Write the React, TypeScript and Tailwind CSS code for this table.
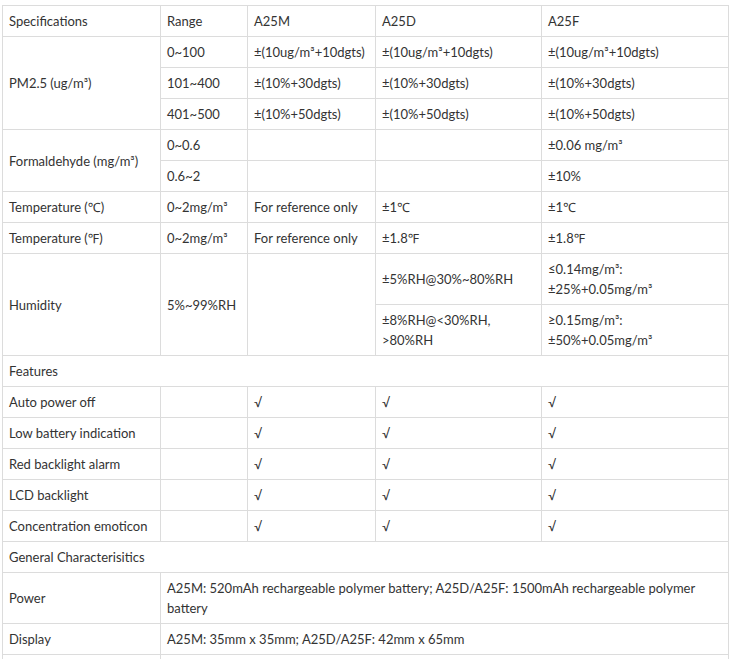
import React from "react";

const td = "border border-[#dcdcdc] px-[6px] py-[5px] align-middle text-left font-normal whitespace-nowrap";

export default function App() {
  return (
    <div
      className="bg-white w-[731px] h-[659px] overflow-hidden pt-[5px] pl-[2px] text-[13px] leading-[20px] text-[#333]"
      style={{ fontFamily: 'Lato, "Noto Sans", "DejaVu Sans", sans-serif' }}
    >
      <table className="border-collapse table-fixed w-[726px]">
        <colgroup>
          <col className="w-[158px]" />
          <col className="w-[87px]" />
          <col className="w-[128px]" />
          <col className="w-[166px]" />
          <col className="w-[187px]" />
        </colgroup>
        <tbody>
          <tr>
            <td className={td}>Specifications</td>
            <td className={td}>Range</td>
            <td className={td}>A25M</td>
            <td className={td}>A25D</td>
            <td className={td}>A25F</td>
          </tr>
          <tr>
            <td className={td} rowSpan={3}>PM2.5 (ug/m³)</td>
            <td className={td}>0~100</td>
            <td className={td}>±(10ug/m³+10dgts)</td>
            <td className={td}>±(10ug/m³+10dgts)</td>
            <td className={td}>±(10ug/m³+10dgts)</td>
          </tr>
          <tr>
            <td className={td}>101~400</td>
            <td className={td}>±(10%+30dgts)</td>
            <td className={td}>±(10%+30dgts)</td>
            <td className={td}>±(10%+30dgts)</td>
          </tr>
          <tr>
            <td className={td}>401~500</td>
            <td className={td}>±(10%+50dgts)</td>
            <td className={td}>±(10%+50dgts)</td>
            <td className={td}>±(10%+50dgts)</td>
          </tr>
          <tr>
            <td className={td} rowSpan={2}>Formaldehyde (mg/m³)</td>
            <td className={td}>0~0.6</td>
            <td className={td}></td>
            <td className={td}></td>
            <td className={td}>±0.06 mg/m³</td>
          </tr>
          <tr>
            <td className={td}>0.6~2</td>
            <td className={td}></td>
            <td className={td}></td>
            <td className={td}>±10%</td>
          </tr>
          <tr>
            <td className={td}>Temperature (℃)</td>
            <td className={td}>0~2mg/m³</td>
            <td className={td}>For reference only</td>
            <td className={td}>±1℃</td>
            <td className={td}>±1℃</td>
          </tr>
          <tr>
            <td className={td}>Temperature (℉)</td>
            <td className={td}>0~2mg/m³</td>
            <td className={td}>For reference only</td>
            <td className={td}>±1.8℉</td>
            <td className={td}>±1.8℉</td>
          </tr>
          <tr>
            <td className={td} rowSpan={2}>Humidity</td>
            <td className={td} rowSpan={2}>5%~99%RH</td>
            <td className={td} rowSpan={2}></td>
            <td className={td}>±5%RH@30%~80%RH</td>
            <td className={td}>
              ≤0.14mg/m³:
              <br />
              ±25%+0.05mg/m³
            </td>
          </tr>
          <tr>
            <td className={td}>
              ±8%RH@&lt;30%RH,
              <br />
              &gt;80%RH
            </td>
            <td className={td}>
              ≥0.15mg/m³:
              <br />
              ±50%+0.05mg/m³
            </td>
          </tr>
          <tr>
            <td className={td} colSpan={5}>Features</td>
          </tr>
          {[
            "Auto power off",
            "Low battery indication",
            "Red backlight alarm",
            "LCD backlight",
            "Concentration emoticon",
          ].map((f) => (
            <tr key={f}>
              <td className={td}>{f}</td>
              <td className={td}></td>
              <td className={td}>√</td>
              <td className={td}>√</td>
              <td className={td}>√</td>
            </tr>
          ))}
          <tr>
            <td className={td} colSpan={5}>General Characterisitics</td>
          </tr>
          <tr>
            <td className={td}>Power</td>
            <td className={td} colSpan={4}>
              A25M: 520mAh rechargeable polymer battery; A25D/A25F: 1500mAh rechargeable polymer
              <br />
              battery
            </td>
          </tr>
          <tr>
            <td className={td}>Display</td>
            <td className={td} colSpan={4}>
              A25M: 35mm x 35mm; A25D/A25F: 42mm x 65mm
            </td>
          </tr>
          <tr>
            <td className={td}>&nbsp;</td>
            <td className={td} colSpan={4}>&nbsp;</td>
          </tr>
        </tbody>
      </table>
    </div>
  );
}
